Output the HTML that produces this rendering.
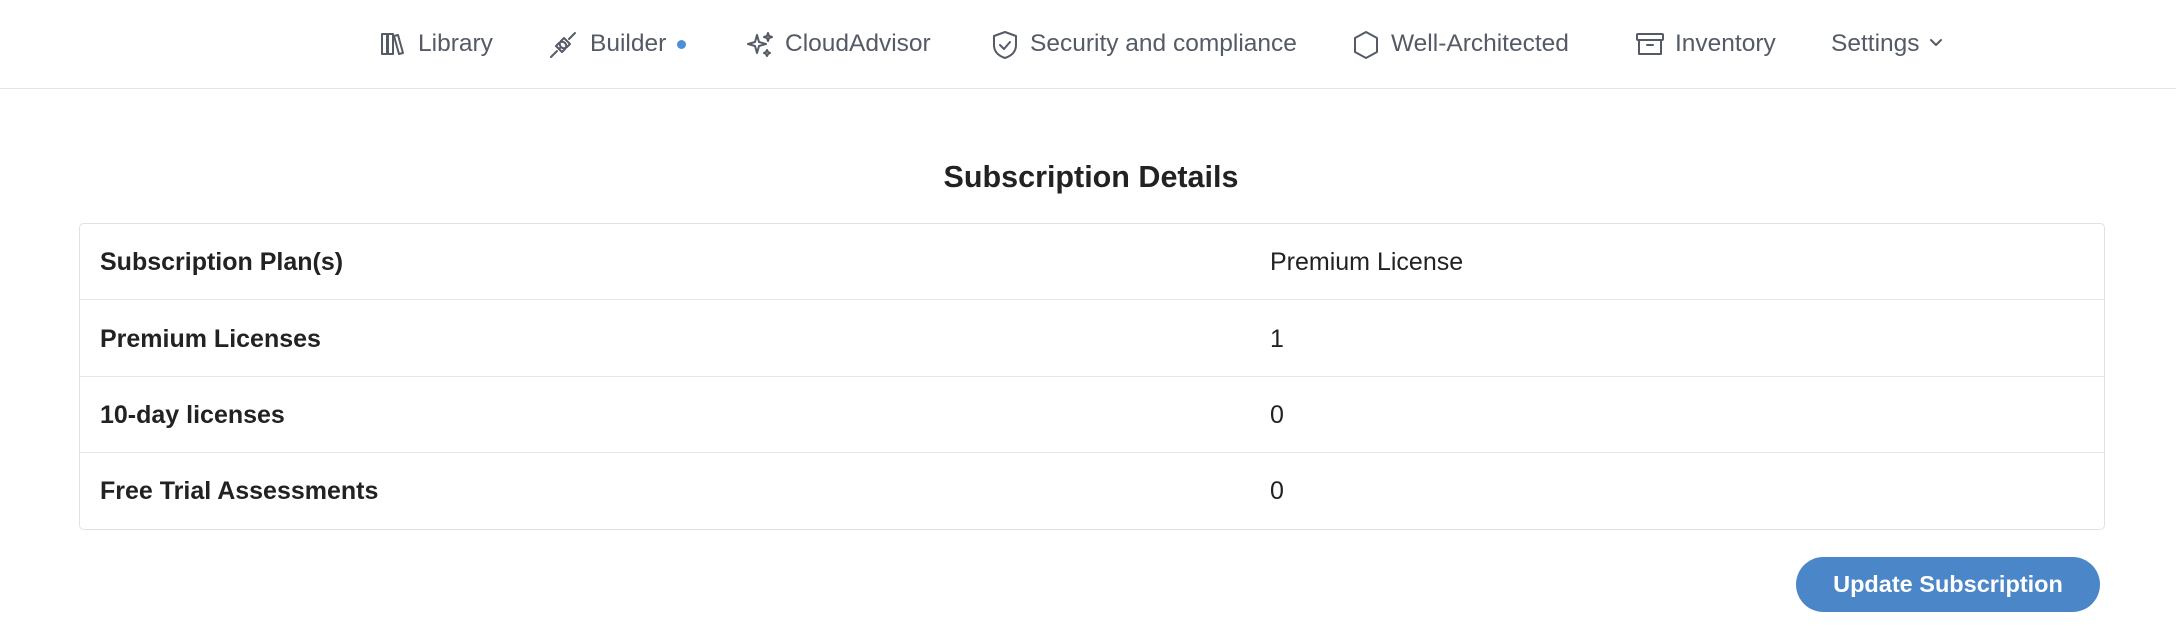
<!DOCTYPE html>
<html><head><meta charset="utf-8"><style>
*{margin:0;padding:0;box-sizing:border-box}
body{width:2176px;height:630px;background:#fff;font-family:"Liberation Sans",sans-serif;position:relative;overflow:hidden}
.nav{position:absolute;top:0;left:0;width:2176px;height:89px;border-bottom:1px solid #e5e5e5}
.ni{position:absolute;top:28px;font-size:24.5px;color:#555b66;line-height:32px;white-space:nowrap}
.ic{position:absolute;top:30px}
svg{fill:none;stroke:#555b66;stroke-width:2;stroke-linecap:round;stroke-linejoin:round}
h1{position:absolute;top:160px;left:0;width:2182px;text-align:center;font-size:30.5px;font-weight:bold;color:#222}
.tbl{position:absolute;left:79px;top:223px;width:2026px;height:307px;border:1px solid #e2e2e2;border-radius:5px}
.row{position:absolute;left:0;width:100%;height:76px;border-bottom:1px solid #e6e6e6}
.l{position:absolute;left:20px;top:24px;font-size:25px;font-weight:bold;color:#222}
.v{position:absolute;left:1190px;top:24px;font-size:25px;color:#222}
.btn{position:absolute;left:1796px;top:557px;width:304px;height:55px;border-radius:28px;background:#4a86c8;color:#fff;font-weight:bold;font-size:23.5px;text-align:center;line-height:55px}
</style></head><body>
<div class="nav">
<svg class="ic" style="left:379px" width="28" height="28" viewBox="0 0 28 28"><rect x="3" y="4" width="5" height="20"/><rect x="9" y="4" width="5" height="20"/><path d="M15 6l4-1 5 18-4 1z"/></svg>
<div class="ni" style="left:418px">Library</div>
<svg class="ic" style="left:548px" width="30" height="30" viewBox="0 0 30 30"><path d="M3 27l6-6M27 3l-6 6M8 16l6 6 3-3a4 4 0 0 0-6-6zM22 14l-6-6-3 3a4 4 0 0 0 6 6zM11 19l2-2M14 22l2-2"/></svg>
<div class="ni" style="left:590px">Builder</div>
<div style="position:absolute;left:677px;top:40px;width:9px;height:9px;border-radius:50%;background:#4a90d9"></div>
<svg class="ic" style="left:745px" width="30" height="30" viewBox="0 0 30 30"><path d="M12 5l2 7 7 2-7 2-2 7-2-7-7-2 7-2zM23 3l1 3 3 1-3 1-1 3-1-3-3-1 3-1zM22 20l1 2 2 1-2 1-1 2-1-2-2-1 2-1z"/></svg>
<div class="ni" style="left:785px">CloudAdvisor</div>
<svg class="ic" style="left:991px" width="28" height="30" viewBox="0 0 28 30"><path d="M14 2l11 4v9c0 7-5 11-11 13C8 26 3 22 3 15V6z"/><path d="M9 15l4 4 6-7"/></svg>
<div class="ni" style="left:1030px">Security and compliance</div>
<svg class="ic" style="left:1352px" width="28" height="30" viewBox="0 0 28 30"><path d="M14 2l11 6v14l-11 6-11-6V8z"/></svg>
<div class="ni" style="left:1391px">Well-Architected</div>
<svg class="ic" style="left:1635px" width="30" height="28" viewBox="0 0 30 28"><rect x="2" y="4" width="26" height="6" rx="1"/><path d="M4 10v14h22V10M12 15h6"/></svg>
<div class="ni" style="left:1675px">Inventory</div>
<div class="ni" style="left:1831px">Settings</div>
<svg style="position:absolute;left:1929px;top:38px" width="14" height="10" viewBox="0 0 14 10"><path d="M2 2l5 5 5-5"/></svg>
</div>
<h1>Subscription Details</h1>
<div class="tbl">
<div class="row" style="top:0"><div class="l">Subscription Plan(s)</div><div class="v">Premium License</div></div>
<div class="row" style="top:77px"><div class="l">Premium Licenses</div><div class="v">1</div></div>
<div class="row" style="top:153px"><div class="l">10-day licenses</div><div class="v">0</div></div>
<div class="row" style="top:229px;border-bottom:none"><div class="l">Free Trial Assessments</div><div class="v">0</div></div>
</div>
<div class="btn">Update Subscription</div>
</body></html>
